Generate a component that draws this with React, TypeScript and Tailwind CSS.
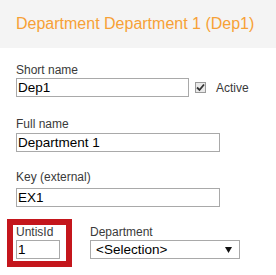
import React from "react";

function Label({ children }: { children: React.ReactNode }) {
  return <div className="text-[12px] leading-[14px] text-[#3a3a3a]">{children}</div>;
}

export default function App() {
  return (
    <div className="w-[276px] h-[275px] bg-white overflow-hidden font-['Liberation_Sans',Arial,sans-serif]">
      <div className="h-[48px] bg-[#f4f4f4] pl-4 pt-[15px]">
        <div className="text-[16px] leading-[18px] text-[#f7a136] whitespace-nowrap">
          Department Department 1 (Dep1)
        </div>
      </div>
      <div className="pl-4">
        <div className="mt-[15px]">
          <Label>Short name</Label>
          <div className="mt-px flex items-center">
            <div className="w-[173px] h-[19px] border border-[#a9a9a9] px-px text-[13.5px] leading-[17px] text-black">Dep1</div>
            <div className="ml-[6px] w-[11px] h-[11px] border border-[#9a9a9a] bg-[#e9e9e9] flex items-center justify-center">
              <svg width="9" height="9" viewBox="0 0 9 9">
                <path d="M1 4.5 L3.5 7 L8 1.5" stroke="#333" strokeWidth="1.8" fill="none" />
              </svg>
            </div>
            <div className="ml-[10px] text-[12px] leading-[14px] text-[#3a3a3a]">Active</div>
          </div>
        </div>
        <div className="mt-[20px]">
          <Label>Full name</Label>
          <div className="mt-[2px] w-[204px] h-[19px] border border-[#a9a9a9] px-px text-[13.5px] leading-[17px] text-black">Department 1</div>
        </div>
        <div className="mt-[18px]">
          <Label>Key (external)</Label>
          <div className="mt-[4px] w-[204px] h-[19px] border border-[#a9a9a9] px-px text-[13.5px] leading-[17px] text-black">EX1</div>
        </div>
        <div className="mt-[12px] flex -ml-[9px]">
          <div className="w-[65px] h-[48px] border-[6px] border-[#c4161c] pl-[3px] pt-[0px]">
            <Label>UntisId</Label>
            <div className="mt-px w-[44px] h-[19px] border border-[#a9a9a9] px-px text-[13.5px] leading-[17px] text-black">1</div>
          </div>
          <div className="ml-[18px] pt-[6px]">
            <Label>Department</Label>
            <div className="mt-px w-[150px] h-[19px] border border-[#a9a9a9] pl-[5px] pr-[7px] flex items-center justify-between text-[13.5px] leading-[17px] text-black">
              <span>&lt;Selection&gt;</span>
              <svg width="7" height="6" viewBox="0 0 7 6">
                <path d="M0 0 H7 L3.5 6 Z" fill="#111" />
              </svg>
            </div>
          </div>
        </div>
      </div>
    </div>
  );
}
